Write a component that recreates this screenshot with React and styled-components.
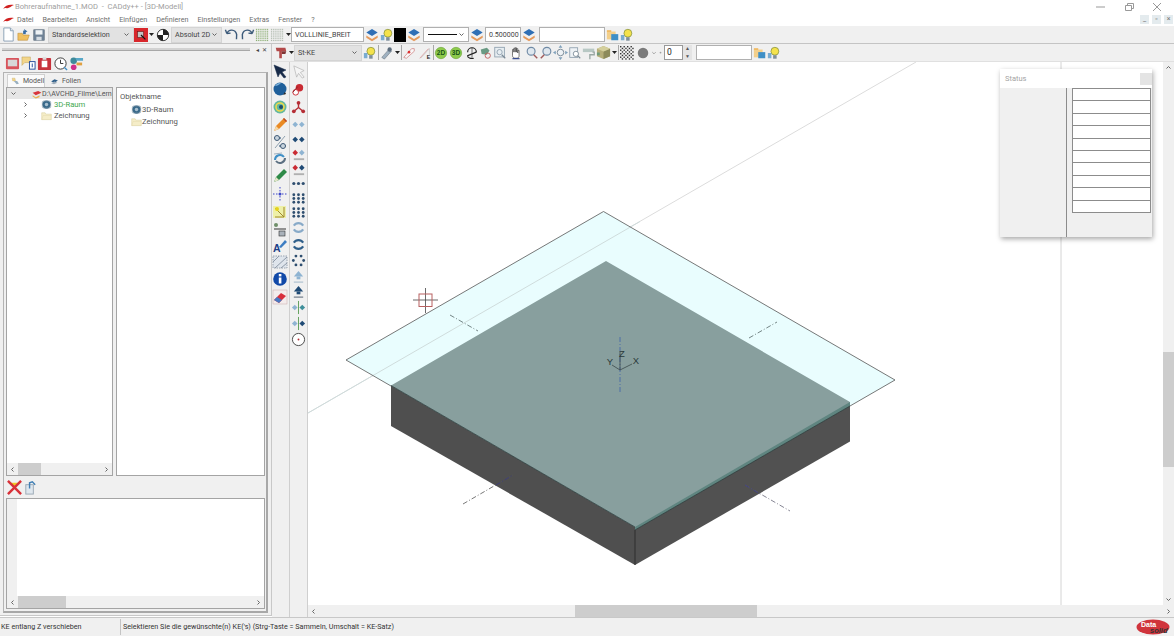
import React from 'react'
import styled, {createGlobalStyle} from 'styled-components'

const Global = createGlobalStyle`
  html, body, #root { margin: 0; padding: 0; height: 100%; background: #fff; overflow: hidden; }
  body { font-family: Roboto, "Liberation Sans", sans-serif; }
`

const Page = styled.div`
  width: 1174px;
  height: 636px;
  display: flex;
  flex-direction: column;
  background: #fff;
  overflow: hidden;
`

const TitleBar = styled.div`
  height: 13px;
  display: flex;
  align-items: center;
  padding-left: 3px;
  font-size: 7.6px;
  color: #a0a0a0;
  white-space: pre;
  svg { margin-right: 1px; }
`
const WinButtons = styled.div`
  margin-left: auto;
  display: flex;
  gap: 12px;
  padding-right: 9px;
  svg { margin: 0; display: block; }
`

const MenuBar = styled.div`
  height: 13px;
  display: flex;
  align-items: center;
  padding-left: 3px;
  font-size: 7.2px;
  color: #6e6e6e;
  background: #fff;
`
const MenuItem = styled.span`
  position: relative;
  margin-left: ${p => p.$ml || 0}px;
`
const MdiButtons = styled.div`
  margin-left: auto;
  display: flex;
  gap: 3px;
  padding-right: 1px;
`
const MdiButton = styled.span`
  width: 9px;
  height: 9px;
  background: #e4ebee;
  color: #777;
  font-size: 7px;
  line-height: 9px;
  text-align: center;
`

const ToolRow = styled.div`
  height: ${p => p.$h || 18}px;
  flex: none;
  display: flex;
  align-items: center;
  background: #f0f0f0;
  border-bottom: 1px solid ${p => p.$line || '#c4c4c4'};
  box-sizing: border-box;
  padding-left: ${p => p.$pl || 0}px;
`

const Slot = styled.span`
  flex: none;
  display: inline-flex;
  margin-left: ${p => p.$ml || 0}px;
  svg { display: block; }
`

const Combo = styled.div`
  flex: none;
  box-sizing: border-box;
  width: ${p => p.$w}px;
  height: 16px;
  margin-left: ${p => p.$ml || 0}px;
  background: #e2e2e2;
  border: 1px solid #d4d4d4;
  display: flex;
  align-items: center;
  padding: 0 3px 0 3px;
  font-size: 7.2px;
  color: #444;
  white-space: nowrap;
  svg { margin-left: auto; }
`
const Field = styled.div`
  flex: none;
  box-sizing: border-box;
  width: ${p => p.$w}px;
  height: 15px;
  margin-left: ${p => p.$ml || 0}px;
  background: #fff;
  border: 1px solid #b0b0b0;
  display: flex;
  align-items: center;
  padding-left: 3px;
  font-size: 7.1px;
  color: #444;
`
const LineCombo = styled(Field)`
  padding: 0 3px 0 4px;
  span { width: 29px; height: 1px; background: #111; }
  svg { margin-left: auto; }
`
const Swatch = styled.span`
  flex: none;
  width: 12px;
  height: 14px;
  margin-left: ${p => p.$ml || 0}px;
  background: #000;
`
const Spinner = styled.div`
  flex: none;
  width: 28px;
  height: 15px;
  margin-left: ${p => p.$ml || 0}px;
  display: flex;
  font-size: 8.5px;
  color: #222;
  b { flex: 1; font-weight: 400; background: #fff; border: 1px solid #999; padding-left: 2px; line-height: 13px; }
  i { width: 9px; display: flex; flex-direction: column; justify-content: space-between; font-style: normal; font-size: 5px; line-height: 7px; text-align: center; color: #555; background: #e4e4e4; }
`
const ToolSep = styled.span`
  flex: none;
  width: 1px;
  height: 15px;
  margin-left: ${p => p.$ml || 0}px;
  background: #a8a8a8;
`

const Main = styled.div`
  flex: 1;
  min-height: 0;
  display: flex;
`
const Dock = styled.div`
  width: 272px;
  flex: none;
  background: #f0f0f0;
  display: flex;
  flex-direction: column;
  box-sizing: border-box;
  padding-bottom: 2px;
  margin-bottom: 1px;
  border-right: 1px solid #c8c8c8;
  border-bottom: 1px solid #c8c8c8;
`
const DockGrip = styled.div`
  height: 11px;
  flex: none;
  display: flex;
  align-items: center;
  padding: 0 4px 0 2px;
  color: #444;
  font-size: 6px;
  i { flex: 1; height: 2px; background: #d2d2d2; border-bottom: 1px solid #a8a8a8; margin-right: 3px; }
  span { margin-left: 3px; }
`
const DockIcons = styled.div`
  height: 17px;
  flex: none;
  display: flex;
  align-items: center;
  gap: 1px;
  padding-left: 5px;
`
const DockFrame = styled.div`
  flex: 1;
  min-height: 0;
  margin: 0 3px 0 3px;
  border: 1px solid #b4b4b4;
  border-bottom: 2px solid #a8a8a8;
  border-right: 2px solid #a8a8a8;
  display: flex;
  flex-direction: column;
  padding: 1px 1px 2px 2px;
`
const Tabs = styled.div`
  height: 13px;
  flex: none;
  display: flex;
  align-items: flex-end;
  padding-left: 1px;
`
const Tab = styled.div`
  height: ${p => (p.$active ? 13 : 12)}px;
  width: ${p => p.$w}px;
  box-sizing: border-box;
  display: flex;
  align-items: center;
  gap: 3px;
  padding-left: 3px;
  font-size: 7px;
  color: #555;
  background: ${p => (p.$active ? '#fafafa' : '#f0f0f0')};
  border: ${p => (p.$active ? '1px solid #d0d0d0' : 'none')};
  border-bottom: none;
`
const Panes = styled.div`
  height: 389px;
  flex: none;
  display: flex;
  gap: 3px;
`
const Pane = styled.div`
  box-sizing: border-box;
  width: ${p => p.$w}px;
  flex: none;
  background: #fff;
  border: 1px solid #a4a4a4;
  display: flex;
  flex-direction: column;
`
const PaneBody = styled.div`
  flex: 1;
  min-height: 0;
  overflow: hidden;
  font-size: 7.7px;
  color: #555;
`
const TreeRow = styled.div`
  height: 11px;
  display: flex;
  align-items: center;
  white-space: nowrap;
  padding-left: ${p => p.$indent || 0}px;
  background: ${p => (p.$selected ? '#e6e6e6' : 'transparent')};
  color: ${p => p.$color || '#555'};
  font-size: ${p => (p.$selected ? 7.1 : 7.7)}px;
  svg { flex: none; }
`
const ListHead = styled.div`
  height: 13px;
  margin-top: 2px;
  padding-left: 3px;
  line-height: 13px;
  color: #555;
`
const ListRow = styled.div`
  height: 12px;
  display: flex;
  align-items: center;
  padding-left: 14px;
  color: #555;
`
const LogBar = styled.div`
  height: 22px;
  flex: none;
  display: flex;
  align-items: center;
  padding-left: 1px;
`
const LogPane = styled.div`
  flex: 1;
  min-height: 0;
  background: #fff;
  border: 1px solid #a4a4a4;
  display: flex;
  flex-direction: column;
`
const LogBody = styled.div`
  flex: 1;
  display: flex;
  i { width: 10px; background: #f0f0f0; }
`

const Track = styled.div`
  flex: none;
  display: flex;
  flex-direction: ${p => (p.$vertical ? 'column' : 'row')};
  ${p => (p.$vertical ? 'width: 11px; align-items: center;' : 'height: 12px; align-items: center;')}
  background: #f0f0f0;
  color: #555;
  font-size: 8px;
`
const Arrow = styled.span`
  flex: none;
  width: 11px;
  height: 11px;
  display: flex;
  align-items: center;
  justify-content: center;
  ${p => p.$end && (p.$vertical ? 'margin-top: auto;' : 'margin-left: auto;')}
`
const Thumb = styled.span`
  flex: none;
  background: #cdcdcd;
  align-self: stretch;
  ${p => (p.$vertical ? `height: ${p.$size}px; margin-top: ${p.$at}px;` : `width: ${p.$size}px; margin-left: ${p.$at}px;`)}
`

const Work = styled.div`
  flex: 1;
  min-width: 0;
  display: flex;
  flex-direction: column;
`
const WorkBody = styled.div`
  flex: 1;
  min-height: 0;
  display: flex;
`
const SideBar = styled.div`
  width: 18px;
  flex: none;
  box-sizing: border-box;
  background: #f0f0f0;
  border-right: 1px solid #cfcfcf;
  display: flex;
  flex-direction: column;
  align-items: center;
  padding-right: 1px;
`
const SideSlot = styled.span`
  flex: none;
  height: ${p => p.$h}px;
  display: flex;
  align-items: center;
  svg { display: block; }
`
const CanvasArea = styled.div`
  flex: 1;
  min-width: 0;
  display: flex;
  flex-direction: column;
`
const CanvasRow = styled.div`
  flex: 1;
  min-height: 0;
  display: flex;
`
const Canvas = styled.div`
  position: relative;
  flex: 1;
  min-width: 0;
  background: #fff;
  svg { display: block; }
`
const StatusWindow = styled.div`
  position: absolute;
  left: 692px;
  top: 7px;
  width: 152px;
  height: 168px;
  background: #f0f0f0;
  box-shadow: 1px 2px 5px rgba(0, 0, 0, 0.35);
  display: flex;
  flex-direction: column;
`
const StatusTitle = styled.div`
  height: 19px;
  flex: none;
  background: #fff;
  display: flex;
  align-items: center;
  padding-left: 5px;
  font-size: 7.5px;
  color: #a4a4a4;
  i { width: 12px; height: 12px; margin-left: auto; background: #e4e4e4; }
`
const StatusBody = styled.div`
  flex: 1;
  display: flex;
`
const StatusLeft = styled.div`
  width: 66px;
  flex: none;
  border-right: 1px solid #8c8c8c;
`
const StatusCells = styled.div`
  flex: 1;
  padding-left: 5px;
  padding-right: 1px;
`
const StatusCell = styled.div`
  height: 12.4px;
  box-sizing: border-box;
  background: #fff;
  border: 1px solid #8c8c8c;
  border-bottom: none;
  &:last-child { border-bottom: 1px solid #8c8c8c; height: 13px; }
`

const StatusBar = styled.div`
  height: 19px;
  flex: none;
  box-sizing: border-box;
  display: flex;
  align-items: center;
  background: #f0f0f0;
  border-top: 1px solid #c8c8c8;
  font-size: 7.2px;
  color: #333;
  svg { display: block; margin-left: auto; margin-right: 2px; }
`
const StatusPart = styled.div`
  width: ${p => p.$w}px;
  flex: none;
  box-sizing: border-box;
  height: 16px;
  line-height: 16px;
  padding-left: ${p => p.$pl}px;
  white-space: nowrap;
  border-right: ${p => (p.$line ? '1px solid #c4c4c4' : 'none')};
`

const Chev = ({dir = 'down', c = '#666', s = 7}) => {
    const pts = {down: '1.5,2.5 3.5,4.5 5.5,2.5', right: '2.5,1.5 4.5,3.5 2.5,5.5', left: '4.5,1.5 2.5,3.5 4.5,5.5', up: '1.5,4.5 3.5,2.5 5.5,4.5'}
    return <svg width={s} height={s} viewBox="0 0 7 7"><polyline points={pts[dir]} fill="none" stroke={c} strokeWidth="1"/></svg>
}
const Drop = () => <Slot $ml={1}><svg width="5" height="5" viewBox="0 0 5 5"><path d="M0 1h5L2.500 4z" fill="#222"/></svg></Slot>

const dia = (x, y, c) => <path key={x + '-' + y} d={`M${x} ${y - 3}l3 3-3 3-3-3z`} fill={c}/>

const ICONS = {
    doc: <><path d="M3 1h7l3 3v11H3z" fill="#fff" stroke="#8aa0b5"/><path d="M10 1v3h3" fill="#dfe8ef" stroke="#8aa0b5"/></>,
    open: <><path d="M1 6h5l1 2h7l-2 6H1z" fill="#f0c060" stroke="#b88830" strokeWidth=".6"/><path d="M8 1l4 3-3 1z" fill="#3a6ea5"/><rect x="7" y="3" width="3" height="4" fill="#3a6ea5"/></>,
    save: <><rect x="2" y="2" width="12" height="12" fill="#6f8296" stroke="#4f5f70" strokeWidth=".6"/><rect x="4" y="2.500" width="8" height="5" fill="#eef2f5"/><rect x="5" y="10" width="6" height="4" fill="#d5dce2"/></>,
    redSel: <><rect x="0" y="0" width="16" height="16" fill="#d8272c"/><rect x="4" y="4" width="7" height="7" fill="#c4c4c4" stroke="#6b1414" strokeWidth=".7"/><path d="M8 8l5 5" stroke="#111" strokeWidth="1.400"/></>,
    globe: <><circle cx="8" cy="8" r="6.500" fill="#fff" stroke="#222"/><path d="M8 1.500A6.500 6.500 0 0 1 14.500 8H8zM8 8v6.500A6.500 6.500 0 0 1 1.500 8z" fill="#222"/></>,
    undo: <path d="M3 7C5 2 12 2 13.500 8l-.2 5M3 7l-1.500-4M3 7l4-.5" fill="none" stroke="#3c5a7a" strokeWidth="1.500"/>,
    redo: <path d="M13 7C11 2 4 2 2.500 8l.2 5M13 7l1.500-4M13 7l-4-.5" fill="none" stroke="#3c5a7a" strokeWidth="1.500"/>,
    layers: <><path d="M8 1l6.500 4L8 9 1.500 5z" fill="#2f6fb5"/><path d="M1.500 8.500L8 12.500l6.500-4V11L8 15l-6.500-4z" fill="#e59a5c"/></>,
    bulb: <><circle cx="9" cy="6" r="4.500" fill="#f4e24c" stroke="#7a8a3c" strokeWidth=".8"/><rect x="7" y="10.500" width="4" height="4" fill="#7f8f9a"/><rect x="1" y="8" width="4" height="6" fill="#5c9bc9" opacity=".8"/></>,
    folderBlue: <><rect x="1" y="4" width="10" height="9" fill="#f3cf8a"/><rect x="1" y="2.500" width="5" height="2" fill="#f0b860"/><rect x="6" y="7" width="8" height="7" fill="#3f8fc6"/></>,
    grid: <g fill="#6c9a4c">{[1, 3, 5, 7, 9, 11, 13].flatMap(x => [2, 4, 6, 8, 10, 12, 14].map(y => <rect key={x + ':' + y} x={x} y={y} width="1" height="1"/>))}</g>,
    gridFade: <g fill="#9aa898">{[1, 3, 5, 7, 9, 11, 13].flatMap(x => [2, 4, 6, 8, 10, 12, 14].map(y => <rect key={x + ':' + y} x={x} y={y} width="1" height="1"/>))}</g>,
    tBar: <><path d="M2 2h11l1 4H9v8H6V6H3z" fill="#b34a4a"/><path d="M9 6h5l-1 3H9z" fill="#7f3434"/></>,
    pen1: <><path d="M2 13L11 3h3v3L5 14z" fill="#f8f8f8" stroke="#c86a6a" strokeWidth=".7"/><circle cx="8" cy="7" r="1.500" fill="#d33"/></>,
    penE: <><path d="M2 14L12 3" stroke="#d88" strokeWidth=".8"/><path d="M3 14L13 3v8" fill="none" stroke="#bbb" strokeWidth=".7"/><text x="10" y="15" fontSize="6" fontWeight="700" fill="#222" fontFamily="Liberation Sans">E</text></>,
    wrench: <><path d="M2 13L10 4l3 2-8 9z" fill="#9fb1c0" stroke="#59626c" strokeWidth=".5"/><circle cx="11" cy="4" r="2.500" fill="#5c6c7c"/></>,
    d2: <><circle cx="8" cy="8" r="6.500" fill="#8ecb4c" stroke="#5d9a28" strokeWidth=".6"/><text x="8" y="10.700" textAnchor="middle" fontSize="7.500" fontWeight="700" fill="#175317" fontFamily="Liberation Sans">2D</text></>,
    d3: <><circle cx="8" cy="8" r="6.500" fill="#8ecb4c" stroke="#5d9a28" strokeWidth=".6"/><text x="8" y="10.700" textAnchor="middle" fontSize="7.500" fontWeight="700" fill="#175317" fontFamily="Liberation Sans">3D</text></>,
    orbit: <><path d="M3 7a5 5 0 0 1 10 0" fill="none" stroke="#222" strokeWidth="1.300"/><path d="M13 7L3 11a5 3 0 0 0 7 3" fill="none" stroke="#222" strokeWidth="1.300"/><path d="M8 2v12" stroke="#222" strokeWidth=".7"/></>,
    zoomGreen: <><path d="M2 4l7-2 3 3-3 5-6-1z" fill="#6a9a84"/><circle cx="10" cy="11" r="3" fill="none" stroke="#c05a5a" strokeWidth="1"/></>,
    zoomBox: <><rect x="2" y="1.500" width="11" height="11" fill="#e8eef2" stroke="#8fa0ae"/><circle cx="7.500" cy="7" r="3" fill="none" stroke="#8fa0ae"/><path d="M10 10l4 4" stroke="#7b8a96" strokeWidth="1.500"/></>,
    hand: <><path d="M4 8V4h1.500v3V2.500H7V7V2h1.500v5V3H10v5V5h1.500v6c0 2-1 3-3.500 3S4 13 4 11z" fill="#fff" stroke="#444" strokeWidth=".8"/><path d="M4 14.500h8" stroke="#223a8a" strokeWidth="1.200"/></>,
    zoomOut: <><circle cx="7" cy="6" r="4.500" fill="#dfe7ee" stroke="#6f8aa5" strokeWidth="1.300"/><path d="M10 10l4 4" stroke="#a05a5a" strokeWidth="1.600"/></>,
    zoomIn: <><circle cx="9" cy="6" r="4.500" fill="#dfe7ee" stroke="#6f8aa5" strokeWidth="1.300"/><path d="M6 10l-4 4" stroke="#a05a5a" strokeWidth="1.600"/></>,
    fit: <><circle cx="8" cy="8" r="3.500" fill="#eef2f5" stroke="#7a8a96"/><path d="M8 0l2 3H6zM8 16l2-3H6zM0 8l3-2v4zM16 8l-3-2v4z" fill="#7fa0ba"/></>,
    page: <><rect x="2" y="2" width="9" height="11" fill="#eef2f5" stroke="#8fa0ae"/><circle cx="9" cy="9" r="3" fill="#fff" stroke="#7a8a96"/><path d="M11 11l3 3" stroke="#7a8a96" strokeWidth="1.300"/></>,
    roller: <><rect x="1" y="3" width="13" height="4" fill="#b8c8c4"/><path d="M12 7h2v3H9v5" fill="none" stroke="#9aa8a4" strokeWidth="1.500"/></>,
    cube: <><path d="M8 1l7 3v8l-7 3-7-3V4z" fill="#b5ad78"/><path d="M8 7l7-3v8l-7 3z" fill="#8d8a5a"/><path d="M8 7L1 4l7-3 7 3z" fill="#d4cf9c"/><rect x="1" y="8" width="3" height="3" fill="#6f9a7a"/></>,
    checker: <g fill="#333">{[0, 1, 2, 3, 4, 5, 6, 7].flatMap(r => [0, 1, 2, 3, 4, 5, 6, 7].filter(c => (r + c) % 2 === 0).map(c => <rect key={r + '/' + c} x={c * 2} y={r * 2} width="1.600" height="1.600"/>))}</g>,
    sphere: <circle cx="8" cy="8" r="6" fill="#7b7b7b"/>,
    star: <circle cx="8" cy="8" r="2" fill="#a0a0a0"/>,
    cursor: <path d="M2 2l12 5-4 2 4 5-2 1-4-5-2 4z" fill="#172a48" stroke="#172a48" strokeWidth=".5"/>,
    cursorLight: <path d="M3 2l11 5-4 2 4 5-2 1-4-5-2 4z" fill="#f5f5f5" stroke="#b0b0b0" strokeWidth=".7"/>,
    ball: <><circle cx="8" cy="8" r="6.500" fill="#1f5f9a"/><path d="M3 5a6 6 0 0 1 6-3c-2 2-4 3-6 3z" fill="#7fb4dc"/><path d="M11 14l3-1-1-2z" fill="#222"/></>,
    redGrab: <><circle cx="9" cy="6" r="4" fill="#c92b33"/><circle cx="5" cy="11" r="3" fill="#fff" stroke="#c92b33"/><path d="M2 11l5-6" stroke="#8a1e24"/></>,
    swirl: <><circle cx="8" cy="8" r="6.500" fill="#62b7a0"/><circle cx="8" cy="8" r="4" fill="none" stroke="#ecd94c" strokeWidth="1.600"/><circle cx="9" cy="8" r="2" fill="#1f4a6a"/></>,
    tri: <><path d="M8 2v6M8 8l-6 5M8 8l6 5" stroke="#b52e36" strokeWidth="1.500"/><circle cx="8" cy="3" r="2" fill="#b52e36"/><circle cx="3" cy="12" r="2" fill="#b52e36"/><circle cx="13" cy="12" r="2" fill="#b52e36"/></>,
    pencil: <><path d="M2 14l2-5 8-8 3 3-8 8z" fill="#ea8a24"/><path d="M2 14l2-5 3 3z" fill="#f4d8a8"/><path d="M12 1l3 3-1 1-3-3z" fill="#b9482c"/></>,
    cog: <><path d="M2 4h7M7 12h7" stroke="#5c7a96" strokeWidth="1.500"/><circle cx="5" cy="4" r="2.500" fill="#c8d4de" stroke="#3f5a76"/><circle cx="11" cy="12" r="2.500" fill="#c8d4de" stroke="#3f5a76"/><path d="M3 14L13 2" stroke="#8fa0ae"/></>,
    loop: <><path d="M3 9a5 5 0 0 1 9-3" fill="none" stroke="#3f8fc6" strokeWidth="2"/><path d="M13 7a5 5 0 0 1-9 3" fill="none" stroke="#5c7082" strokeWidth="2"/><path d="M2 3l8-1" stroke="#9fb1c0"/></>,
    greenPen: <><path d="M2 14l2-5 8-8 3 3-8 8z" fill="#2e8a48"/><path d="M2 14l2-5 3 3z" fill="#e6e6c8"/></>,
    dotCross: <><path d="M8 1v14M1 8h14" stroke="#3c46c8" strokeWidth="1" strokeDasharray="1.500 1.500"/><circle cx="8" cy="8" r="1.500" fill="#3c46c8"/></>,
    sun: <><rect x="1" y="2" width="13" height="12" fill="#eef0a8"/><path d="M3 4l9 9M12 3v10M3 13h9" stroke="#a08a2c"/><circle cx="5" cy="5" r="2" fill="#e6d21c"/></>,
    dim: <><circle cx="4" cy="4" r="2" fill="#6f8f6a"/><path d="M2 8h12" stroke="#333"/><rect x="7" y="10" width="6" height="5" fill="#aab2ba" stroke="#333" strokeWidth=".6"/></>,
    aPen: <><text x="1" y="13.500" fontSize="10.500" fontWeight="700" fill="#1d3f86" fontFamily="Liberation Sans">A</text><path d="M7 9l6-7 2 2-6 6z" fill="#3d7dc2"/></>,
    hatch: <><rect x="1" y="2" width="14" height="12" fill="#dfe5ec" stroke="#9aa4b0" strokeDasharray="1.500 1"/><path d="M1 8l6-6M3 14L15 3M9 14l6-5" stroke="#8f9aa8"/></>,
    info: <><circle cx="8" cy="8" r="6.800" fill="#1149a8"/><rect x="6.800" y="3" width="2.600" height="2.400" fill="#fff"/><rect x="6.800" y="6.500" width="2.600" height="6" fill="#fff"/></>,
    eraser: <><rect x="1" y="1" width="14" height="14" fill="#f4ecec" stroke="#c8a8a8" strokeWidth=".5"/><path d="M2 11l7-7 5 3-7 7z" fill="#d82f3c"/><path d="M2 11l3-3 5 3-3 3z" fill="#4a78c0"/></>,
    d1: [dia(4.500, 8, '#8fb4d2'), dia(11.500, 8, '#8fb4d2')],
    d2a: [dia(4.500, 8, '#1f4a75'), dia(11.500, 8, '#1f4a75')],
    d3a: <>{dia(4.500, 6, '#c92b33')}{dia(11.500, 6, '#8fb4d2')}<rect x="3" y="12" width="11" height="2" fill="#b0b0b0"/></>,
    d4a: <>{dia(4.500, 6, '#c92b33')}{dia(11.500, 6, '#1f4a75')}<rect x="3" y="12" width="11" height="2" fill="#b0b0b0"/></>,
    dots3: <g fill="#2f4f70">{[3, 8, 13].map(x => <circle key={x} cx={x} cy="8" r="1.700"/>)}</g>,
    dots6: <g fill="#2f4f70">{[3, 8, 13].flatMap(x => [4, 8, 12].map(y => <circle key={x + '+' + y} cx={x} cy={y} r="1.500"/>))}</g>,
    rotA: <path d="M13 6a6 6 0 0 0-10 0M3 10a6 6 0 0 0 10 0" fill="none" stroke="#88aac8" strokeWidth="2.200"/>,
    rotB: <path d="M13 6a6 6 0 0 0-10 0M3 10a6 6 0 0 0 10 0" fill="none" stroke="#2f5f8a" strokeWidth="2.200"/>,
    ring: <g fill="#2f4f70">{[0, 60, 120, 180, 240, 300].map(a => <circle key={a} cx={8 + 5.500 * Math.cos(a * Math.PI / 180)} cy={8 + 5.500 * Math.sin(a * Math.PI / 180)} r="1.500"/>)}</g>,
    up1: <><path d="M8 2l5 6H3z" fill="#8fb4d2"/><path d="M6 8h4v3H6z" fill="#8fb4d2"/><path d="M3 14h10" stroke="#b8c8d4" strokeWidth="1.500"/></>,
    up2: <><path d="M8 2l5 6H3z" fill="#1f4a75"/><path d="M6 8h4v3H6z" fill="#1f4a75"/><path d="M3 14h10" stroke="#808c98" strokeWidth="1.500"/></>,
    mir1: <>{dia(4, 8, '#8fb4d2')}{dia(12, 8, '#3f8f9a')}<path d="M8 1v14" stroke="#5e9e58"/></>,
    mir2: <>{dia(4, 8, '#8fb4d2')}{dia(12, 8, '#1f4a75')}<path d="M8 1v14" stroke="#5e9e58"/></>,
    target: <><circle cx="8" cy="8" r="6.500" fill="#fff" stroke="#444"/><circle cx="8" cy="8" r="1" fill="#b52e36"/></>,
    inbox: <><rect x="1" y="2" width="14" height="12" rx="1" fill="#d8545c"/><rect x="3" y="4" width="10" height="7" fill="#d8d8d8"/></>,
    tag: <><path d="M1 1h9v6H4l-3 3z" fill="#f2d58a" stroke="#b89a4a" strokeWidth=".5"/><rect x="9" y="6" width="6" height="8" fill="#fff" stroke="#1f4a9a"/><path d="M12 8v4" stroke="#1f4a9a"/></>,
    redBox: <><rect x="1" y="2" width="14" height="13" rx="1" fill="#c8323c"/><rect x="5" y="5" width="6" height="7" fill="#fff"/><path d="M6 1h4v3H6z" fill="#e0e0e0"/></>,
    clock: <><circle cx="8" cy="8" r="6" fill="#fff" stroke="#333"/><path d="M8 4v4h3" stroke="#333" fill="none"/><path d="M12 12l3 3" stroke="#3f8fc6" strokeWidth="1.500"/></>,
    palette: <><circle cx="5" cy="5" r="3.500" fill="#3f8a9a"/><circle cx="5" cy="12" r="3" fill="#d0308a"/><path d="M7 2h8v3H8z" fill="#58a8c8"/><path d="M8 7h6v3H8z" fill="#e0a040"/></>,
    modell: <><path d="M2 2h5l1 5h-5z" fill="#f2d58a" stroke="#b89a4a" strokeWidth=".5"/><path d="M5 7l5 6 4-1-3-5z" fill="#9ab0c0"/></>,
    folien: <><path d="M2 8l6-4 6 2-6 4z" fill="#2f5f8a"/><path d="M2 11l6-3 5 2-6 3z" fill="#9aaab8"/></>,
    x3d: <><circle cx="8" cy="8" r="6" fill="#3a6a8a"/><rect x="2" y="3" width="12" height="10" rx="2" fill="none" stroke="#6f8a9e"/><circle cx="8" cy="8" r="2.500" fill="#a8c0d0"/></>,
    folder: <><path d="M1 4h5l1 2h8v8H1z" fill="#f5edc8" stroke="#d0c48c" strokeWidth=".6"/><path d="M1 14l2-6h12" fill="none" stroke="#e2d8a8" strokeWidth=".6"/></>,
    drive: <><path d="M1 6l9-3 5 3-9 4z" fill="#d8343a"/><path d="M1 10l5 3 6-3v3l-6 2-5-3z" fill="#e8b050"/></>,
    delete: <><path d="M3 3l5 4 5-4" fill="#f0c828"/><path d="M1 1l14 14M15 1L1 15" stroke="#d83038" strokeWidth="2.600"/></>,
    clip: <><rect x="3" y="5" width="8" height="10" fill="#dfe7ee" stroke="#9aa8b4"/><path d="M7 9V3l3-1 3 3" fill="none" stroke="#3f7fb5" strokeWidth="1.500"/></>,
}

const Icon = ({name, s = 14, ml, drop}) => (
    <>
        <Slot $ml={ml}><svg width={s} height={s} viewBox="0 0 16 16">{ICONS[name]}</svg></Slot>
        {drop && <Drop/>}
    </>
)

const LEFT_TOOLS = [
    ['cursor', 18], ['ball', 18], ['swirl', 18], ['pencil', 17], ['cog', 18], ['loop', 16], ['greenPen', 18],
    ['dotCross', 18], ['sun', 17], ['dim', 17], ['aPen', 17], ['hatch', 16], ['info', 18], ['eraser', 17],
]
const RIGHT_TOOLS = [
    ['cursorLight', 18], ['redGrab', 18], ['tri', 18], ['d1', 16], ['d2a', 15], ['d3a', 15], ['d4a', 14], ['dots3', 15],
    ['dots6', 14], ['dots6', 14], ['rotA', 17], ['rotB', 17], ['ring', 15], ['up1', 16], ['up2', 14], ['mir1', 18], ['mir2', 14], ['target', 18],
]

function Scroll({vertical, at, size}) {
    return (
        <Track $vertical={vertical}>
            <Arrow $vertical={vertical}><Chev dir={vertical ? 'up' : 'left'}/></Arrow>
            <Thumb $vertical={vertical} $at={at} $size={size}/>
            <Arrow $vertical={vertical} $end><Chev dir={vertical ? 'down' : 'right'}/></Arrow>
        </Track>
    )
}

function TopToolbar() {
    return (
        <ToolRow $pl={1}>
            <Icon name="doc" s={15}/>
            <Icon name="open" s={14} ml={1}/>
            <Icon name="save" s={14} ml={1}/>
            <Combo $w={86} $ml={2}>Standardselektion<Chev/></Combo>
            <Icon name="redSel" s={14} drop/>
            <Icon name="globe" s={14} ml={2}/>
            <Combo $w={51} $ml={1}>Absolut 2D<Chev/></Combo>
            <Icon name="undo" s={15} ml={2}/>
            <Icon name="redo" s={15} ml={1}/>
            <Icon name="grid" s={15}/>
            <Icon name="gridFade" s={15}/>
            <Drop/>
            <Field $w={73}>VOLLLINIE_BREIT</Field>
            <Icon name="layers" s={14} ml={1}/>
            <Icon name="bulb" s={14} ml={1}/>
            <Swatch/>
            <Icon name="layers" s={14} ml={1}/>
            <LineCombo $w={46} $ml={2}><span/><Chev/></LineCombo>
            <Icon name="layers" s={14} ml={1}/>
            <Field $w={36} $ml={1}>0.500000</Field>
            <Icon name="layers" s={14} ml={1}/>
            <Field $w={66} $ml={3}/>
            <Icon name="folderBlue" s={14} ml={1}/>
            <Icon name="bulb" s={14}/>
        </ToolRow>
    )
}

function SecondToolbar() {
    return (
        <ToolRow $pl={2} $line="#e0e0e0">
            <Icon name="tBar" s={14} drop/>
            <Combo $w={68}>St-KE<Chev/></Combo>
            <Icon name="bulb" s={14} ml={1}/>
            <ToolSep $ml={1}/>
            <Icon name="wrench" s={14} ml={1} drop/>
            <ToolSep $ml={1}/>
            <Icon name="pen1" s={14}/>
            <Icon name="penE" s={14} ml={2}/>
            <ToolSep $ml={1}/>
            <Icon name="d2" s={14}/>
            <Icon name="d3" s={14} ml={1}/>
            <Icon name="orbit" s={14} ml={2}/>
            <Icon name="zoomGreen" s={14}/>
            <Icon name="zoomBox" s={14}/>
            <Icon name="hand" s={14} ml={2}/>
            <Icon name="zoomOut" s={14} ml={2}/>
            <Icon name="zoomIn" s={14}/>
            <Icon name="fit" s={15}/>
            <Icon name="page" s={14}/>
            <Icon name="roller" s={14}/>
            <Icon name="cube" s={15}/>
            <Drop/>
            <ToolSep $ml={1}/>
            <Icon name="checker" s={14} ml={1}/>
            <Icon name="sphere" s={14} ml={2}/>
            <Slot $ml={1}><Chev s={6} c="#999"/></Slot>
            <Icon name="star" s={7}/>
            <Spinner><b>0</b><i><span>▲</span><span>▼</span></i></Spinner>
            <Field $w={56} $ml={4}/>
            <Icon name="folderBlue" s={14} ml={1}/>
            <Icon name="bulb" s={14}/>
        </ToolRow>
    )
}

function LeftDock() {
    return (
        <Dock>
            <DockGrip><i/><span>◂</span><span>✕</span></DockGrip>
            <DockIcons>
                <Icon name="inbox" s={15}/>
                <Icon name="tag" s={15}/>
                <Icon name="redBox" s={15}/>
                <Icon name="clock" s={15}/>
                <Icon name="palette" s={15}/>
            </DockIcons>
            <DockFrame>
                <Tabs>
                    <Tab $active $w={38}><Icon name="modell" s={9}/>Modell</Tab>
                    <Tab $w={33}><Icon name="folien" s={9} ml={2}/>Folien</Tab>
                </Tabs>
                <Panes>
                    <Pane $w={107}>
                        <PaneBody>
                            <TreeRow $selected $indent={3}><Chev/><Slot $ml={15}><svg width="10" height="10" viewBox="0 0 16 16">{ICONS.drive}</svg></Slot>D:\AVCHD_Filme\Lern</TreeRow>
                            <TreeRow $indent={15} $color="#3fa84f"><Chev dir="right"/><Slot $ml={12}><svg width="11" height="11" viewBox="0 0 16 16">{ICONS.x3d}</svg></Slot>&nbsp;3D-Raum</TreeRow>
                            <TreeRow $indent={15}><Chev dir="right"/><Slot $ml={12}><svg width="11" height="11" viewBox="0 0 16 16">{ICONS.folder}</svg></Slot>&nbsp;Zeichnung</TreeRow>
                        </PaneBody>
                        <Scroll at={0} size={23}/>
                    </Pane>
                    <Pane $w={149}>
                        <PaneBody>
                            <ListHead>Objektname</ListHead>
                            <ListRow><svg width="11" height="11" viewBox="0 0 16 16">{ICONS.x3d}</svg>3D-Raum</ListRow>
                            <ListRow><svg width="11" height="11" viewBox="0 0 16 16">{ICONS.folder}</svg>Zeichnung</ListRow>
                        </PaneBody>
                    </Pane>
                </Panes>
                <LogBar>
                    <Icon name="delete" s={15}/>
                    <Icon name="clip" s={15} ml={1}/>
                </LogBar>
                <LogPane>
                    <LogBody><i/></LogBody>
                    <Scroll at={0} size={48}/>
                </LogPane>
            </DockFrame>
        </Dock>
    )
}

function Drawing() {
    return (
        <svg width="855" height="543" viewBox="308 62 855 543">
            <line x1="1061" y1="62" x2="1061" y2="605" stroke="#d4d4d4" strokeWidth="1"/>
            <line x1="308" y1="413" x2="916" y2="62" stroke="#dcdcdc" strokeWidth="1"/>
            <polygon points="603.500,211.500 895,380 850,406 391,386 346,360" fill="#e9fdfe"/>
            <line x1="308" y1="413" x2="640" y2="221.500" stroke="#cfdcdc" strokeWidth="1"/>
            <polyline points="391,386 346,360 603.500,211.500 895,380 850,406" fill="none" stroke="#555" strokeWidth=".8"/>
            <line x1="450" y1="315" x2="478" y2="331" stroke="#566" strokeWidth=".8" strokeDasharray="5 2 1 2"/>
            <line x1="749" y1="338" x2="777" y2="322" stroke="#566" strokeWidth=".8" strokeDasharray="5 2 1 2"/>

            <polygon points="391,385.500 635,527 635,565 391,426" fill="#4f4f4f"/>
            <polygon points="635,527 850,403 850,441.500 635,565" fill="#515151"/>
            <polygon points="606,261 850,402 850,406 635,530 635,527 391,385.500" fill="#889f9e"/>
            <polygon points="635,527 850,402 850,406 635,530" fill="#5f8580"/>
            <line x1="635" y1="530" x2="850" y2="406" stroke="#2d3a3a" strokeWidth=".8"/>
            <line x1="391" y1="385.500" x2="635" y2="527" stroke="#2a3e3e" strokeWidth=".8"/>
            <line x1="635" y1="530" x2="635" y2="565" stroke="#2e2e2e" strokeWidth="1"/>

            <line x1="463" y1="504" x2="513" y2="475" stroke="#555" strokeWidth=".8" strokeDasharray="5 2 1 2"/>
            <line x1="496" y1="485" x2="513" y2="475" stroke="#3a3a80" strokeWidth=".8" strokeDasharray="5 2 1 2"/>
            <line x1="745" y1="485" x2="790" y2="511" stroke="#667" strokeWidth=".8" strokeDasharray="5 2 1 2"/>
            <line x1="745" y1="485" x2="760" y2="494" stroke="#3a3a80" strokeWidth=".8" strokeDasharray="5 2 1 2"/>

            <line x1="620" y1="337" x2="620" y2="394" stroke="#3f62a8" strokeWidth=".8" strokeDasharray="5 2 1 2"/>
            <polyline points="612,365 620,370 632,364" fill="none" stroke="#3c4a4a" strokeWidth=".8"/>
            <line x1="620" y1="370" x2="620" y2="352" stroke="#3c4a4a" strokeWidth=".8"/>
            <text x="610" y="365" fontSize="9.500" fill="#2a3a3a" textAnchor="middle" fontFamily="Liberation Sans">Y</text>
            <text x="636" y="364" fontSize="9.500" fill="#2a3a3a" textAnchor="middle" fontFamily="Liberation Sans">X</text>
            <text x="622" y="357" fontSize="9.500" fill="#2a3a3a" textAnchor="middle" fontFamily="Liberation Sans">Z</text>

            <path d="M413 300h25M425.500 288v25" stroke="#444" strokeWidth=".8"/>
            <rect x="419" y="294" width="13" height="12.500" fill="none" stroke="#b86060" strokeWidth="1"/>
        </svg>
    )
}

function StatusPanel() {
    return (
        <StatusWindow>
            <StatusTitle>Status<i/></StatusTitle>
            <StatusBody>
                <StatusLeft/>
                <StatusCells>
                    {Array.from({length: 10}, (_, i) => <StatusCell key={i}/>)}
                </StatusCells>
            </StatusBody>
        </StatusWindow>
    )
}

const MENU = [['Datei', 3], ['Bearbeiten', 9], ['Ansicht', 9], ['Einfügen', 9], ['Definieren', 9], ['Einstellungen', 9], ['Extras', 9], ['Fenster', 9], ['?', 9]]

export default function App() {
    const logoMark = <svg width="11" height="6" viewBox="0 0 11 6"><path d="M0 5C2 1 7 0 11 1 8 2 6 5 3 4 2 4 1 4 0 5z" fill="#d02020"/></svg>
    return (
        <Page>
            <Global/>
            <TitleBar>
                {logoMark}Bohreraufnahme_1.MOD  -  CADdy++ - [3D-Modell]
                <WinButtons>
                    <svg width="16" height="10" viewBox="0 0 16 10"><path d="M3 5h9" stroke="#999"/></svg>
                    <svg width="16" height="10" viewBox="0 0 16 10"><path d="M4.500 3.500h6v5h-6zM6.500 3.500v-2h6v5h-2" fill="none" stroke="#999"/></svg>
                    <svg width="16" height="10" viewBox="0 0 16 10"><path d="M4 1l8 8M12 1l-8 8" stroke="#999"/></svg>
                </WinButtons>
            </TitleBar>
            <MenuBar>
                {logoMark}
                {MENU.map(([label, ml]) => <MenuItem key={label} $ml={ml}>{label}</MenuItem>)}
                <MdiButtons>
                    <MdiButton>_</MdiButton>
                    <MdiButton>▫</MdiButton>
                    <MdiButton>×</MdiButton>
                </MdiButtons>
            </MenuBar>
            <TopToolbar/>
            <Main>
                <LeftDock/>
                <Work>
                    <SecondToolbar/>
                    <WorkBody>
                        <SideBar>
                            {LEFT_TOOLS.map(([name, h], i) => <SideSlot key={i} $h={h}><Icon name={name} s={16}/></SideSlot>)}
                        </SideBar>
                        <SideBar>
                            {RIGHT_TOOLS.map(([name, h], i) => <SideSlot key={i} $h={h}><Icon name={name} s={15}/></SideSlot>)}
                        </SideBar>
                        <CanvasArea>
                            <CanvasRow>
                                <Canvas>
                                    <Drawing/>
                                    <StatusPanel/>
                                </Canvas>
                                <Scroll vertical at={279} size={115}/>
                            </CanvasRow>
                            <Scroll at={256} size={182}/>
                        </CanvasArea>
                    </WorkBody>
                </Work>
            </Main>
            <StatusBar>
                <StatusPart $w={121} $pl={1} $line>KE entlang Z verschieben</StatusPart>
                <StatusPart $w={700} $pl={2}>Selektieren Sie die gewünschte(n) KE('s) (Strg-Taste = Sammeln, Umschalt = KE-Satz)</StatusPart>
                <svg width="36" height="17" viewBox="0 0 36 17">
                    <ellipse cx="17" cy="8" rx="16.500" ry="7.500" fill="#d0343c"/>
                    <text x="5" y="7.500" fontSize="7" fontWeight="700" fill="#fff" fontFamily="Liberation Sans">Data</text>
                    <text x="14" y="14" fontSize="7.500" fontWeight="700" fontStyle="italic" fill="#333" fontFamily="Liberation Sans">solid</text>
                </svg>
            </StatusBar>
        </Page>
    )
}
